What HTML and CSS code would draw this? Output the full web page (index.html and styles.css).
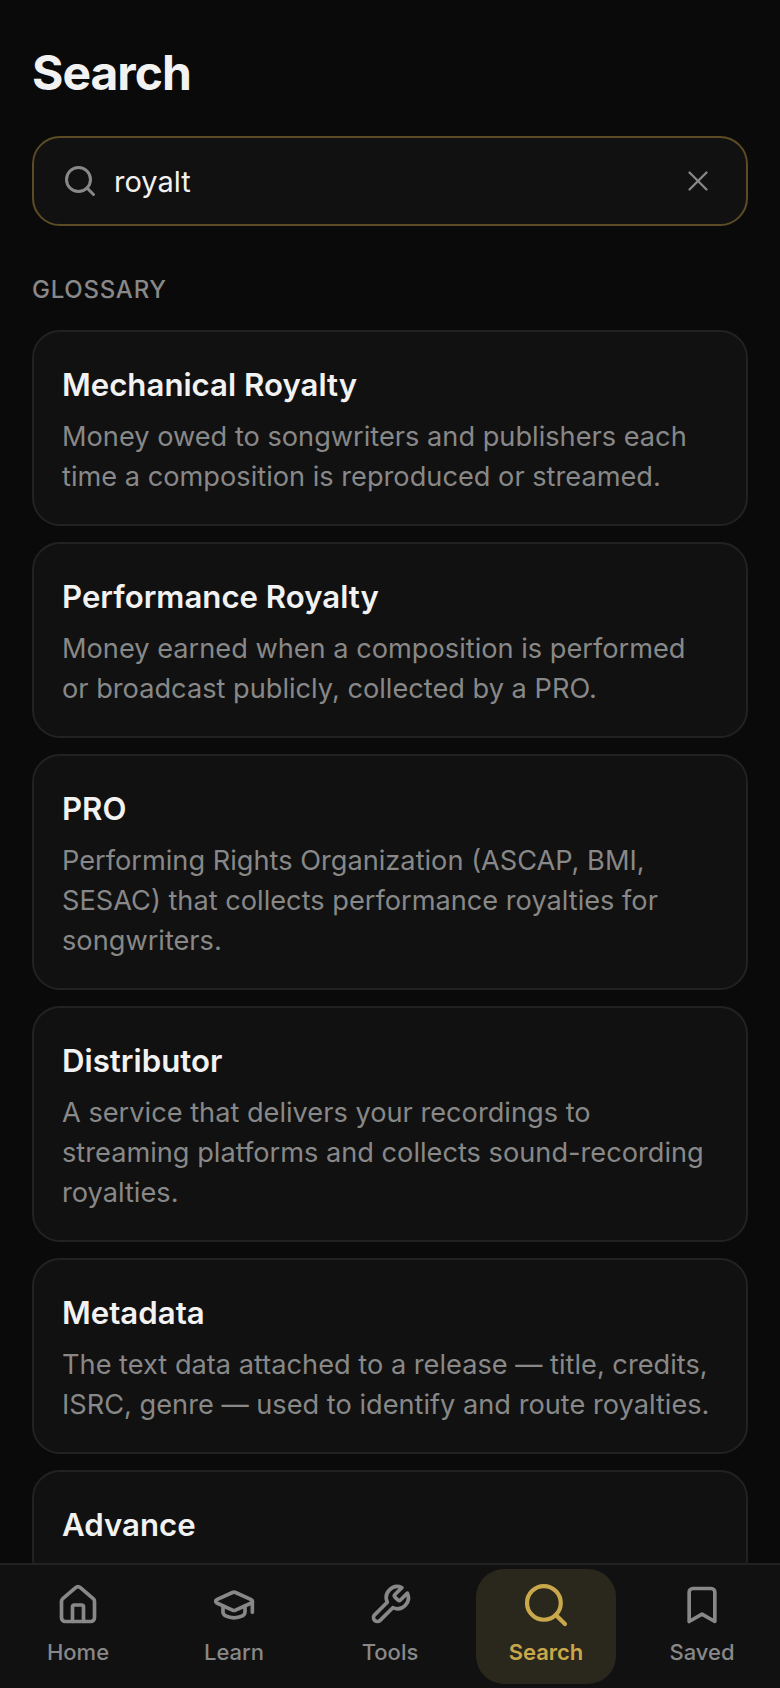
FILE: index.html
```html
<!DOCTYPE html>
<html lang="en">
<head>
  <meta charset="UTF-8" />
  <meta name="viewport" content="width=device-width, initial-scale=1.0" />
  <title>Search</title>
  <link rel="stylesheet" href="styles.css">
</head>
<body>
  <main class="content">
    <h1>Search</h1>

    <div class="search-box">
      <svg class="search-icon" viewBox="0 0 24 24"><circle cx="11" cy="11" r="8"/><path d="m21 21-4.3-4.3"/></svg>
      <span class="search-text">royalt</span>
      <svg class="clear-icon" viewBox="0 0 24 24"><path d="M18 6 6 18"/><path d="m6 6 12 12"/></svg>
    </div>

    <h2>GLOSSARY</h2>

    <div class="results">
      <div class="card">
        <h3>Mechanical Royalty</h3>
        <p>Money owed to songwriters and publishers each time a composition is reproduced or streamed.</p>
      </div>
      <div class="card">
        <h3>Performance Royalty</h3>
        <p>Money earned when a composition is performed or broadcast publicly, collected by a PRO.</p>
      </div>
      <div class="card">
        <h3>PRO</h3>
        <p>Performing Rights Organization (ASCAP, BMI, SESAC) that collects performance royalties for songwriters.</p>
      </div>
      <div class="card">
        <h3>Distributor</h3>
        <p>A service that delivers your recordings to streaming platforms and collects sound-recording royalties.</p>
      </div>
      <div class="card">
        <h3>Metadata</h3>
        <p>The text data attached to a release — title, credits, ISRC, genre — used to identify and route royalties.</p>
      </div>
      <div class="card">
        <h3>Advance</h3>
      </div>
    </div>
  </main>

  <nav class="tabbar">
    <a class="tab">
      <svg viewBox="0 0 24 24"><path d="M15 21v-8a1 1 0 0 0-1-1h-4a1 1 0 0 0-1 1v8"/><path d="M3 10a2 2 0 0 1 .709-1.528l7-5.999a2 2 0 0 1 2.582 0l7 5.999A2 2 0 0 1 21 10v9a2 2 0 0 1-2 2H5a2 2 0 0 1-2-2z"/></svg>
      <span>Home</span>
    </a>
    <a class="tab">
      <svg viewBox="0 0 24 24"><path d="M21.42 10.922a1 1 0 0 0-.019-1.838L12.83 5.18a2 2 0 0 0-1.66 0L2.6 9.08a1 1 0 0 0 0 1.832l8.57 3.908a2 2 0 0 0 1.66 0z"/><path d="M22 10v6"/><path d="M6 12.5V16a6 3 0 0 0 12 0v-3.5"/></svg>
      <span>Learn</span>
    </a>
    <a class="tab">
      <svg viewBox="0 0 24 24"><path d="M14.7 6.3a1 1 0 0 0 0 1.4l1.6 1.6a1 1 0 0 0 1.4 0l3.77-3.77a6 6 0 0 1-7.94 7.94l-6.91 6.91a2.12 2.12 0 0 1-3-3l6.91-6.91a6 6 0 0 1 7.94-7.94l-3.76 3.76z"/></svg>
      <span>Tools</span>
    </a>
    <a class="tab active">
      <svg viewBox="0 0 24 24"><circle cx="11" cy="11" r="8"/><path d="m21 21-4.3-4.3"/></svg>
      <span>Search</span>
    </a>
    <a class="tab">
      <svg viewBox="0 0 24 24"><path d="m19 21-7-4-7 4V5a2 2 0 0 1 2-2h10a2 2 0 0 1 2 2v16z"/></svg>
      <span>Saved</span>
    </a>
  </nav>
</body>
</html>
```

FILE: styles.css
```css
html, body {
  height: 100%;
}

body {
  margin: 0;
  display: flex;
  flex-direction: column;
  overflow: hidden;
  background-color: #0a0a0a;
  color: #f2f2f2;
  font-family: Inter, 'Noto Sans', sans-serif;
}

svg {
  fill: none;
  stroke: currentColor;
  stroke-width: 2;
  stroke-linecap: round;
  stroke-linejoin: round;
}

.content {
  flex: 1;
  min-height: 0;
  overflow: hidden;
  padding: 41px 32px 0;
}

h1 {
  margin: 0;
  font-size: 48px;
  line-height: 64px;
  font-weight: 700;
  letter-spacing: -1px;
}

.search-box {
  display: flex;
  align-items: center;
  gap: 16px;
  height: 90px;
  box-sizing: border-box;
  margin-top: 31px;
  padding: 0 31px 0 28px;
  background-color: #111111;
  border: 2px solid #5c4c26;
  border-radius: 28px;
}

.search-icon {
  width: 36px;
  height: 36px;
  color: #888888;
}

.search-text {
  flex: 1;
  font-size: 29px;
}

.clear-icon {
  width: 34px;
  height: 34px;
  stroke-width: 1.6;
  color: #888888;
}

h2 {
  margin: 48px 0 24px;
  font-size: 24px;
  line-height: 32px;
  font-weight: 500;
  letter-spacing: 0.75px;
  color: #888888;
}

.results {
  display: flex;
  flex-direction: column;
  gap: 16px;
}

.card {
  padding: 31px 28px 27px;
  background-color: #111111;
  border: 2px solid #222222;
  border-radius: 28px;
}

h3 {
  margin: 0 0 10px;
  font-size: 31.2px;
  line-height: 44px;
  font-weight: 600;
}

.card p {
  margin: 0;
  font-size: 27.2px;
  line-height: 40px;
  color: #888888;
}

.tabbar {
  flex-shrink: 0;
  display: flex;
  gap: 16px;
  height: 125px;
  box-sizing: border-box;
  padding: 4px 8px;
  background-color: #111111;
  border-top: 2px solid #222222;
}

.tab {
  flex: 1;
  display: flex;
  flex-direction: column;
  align-items: center;
  justify-content: center;
  gap: 11px;
  padding-bottom: 5px;
  border-radius: 28px;
  font-size: 22px;
  line-height: 28px;
  font-weight: 500;
  color: #888888;
}

.tab svg {
  width: 44px;
  height: 44px;
}

.tab.active {
  background-color: #2a271c;
  color: #c9a84c;
  font-weight: 600;
}

.tab.active svg {
  transform: scale(1.15);
}
```
